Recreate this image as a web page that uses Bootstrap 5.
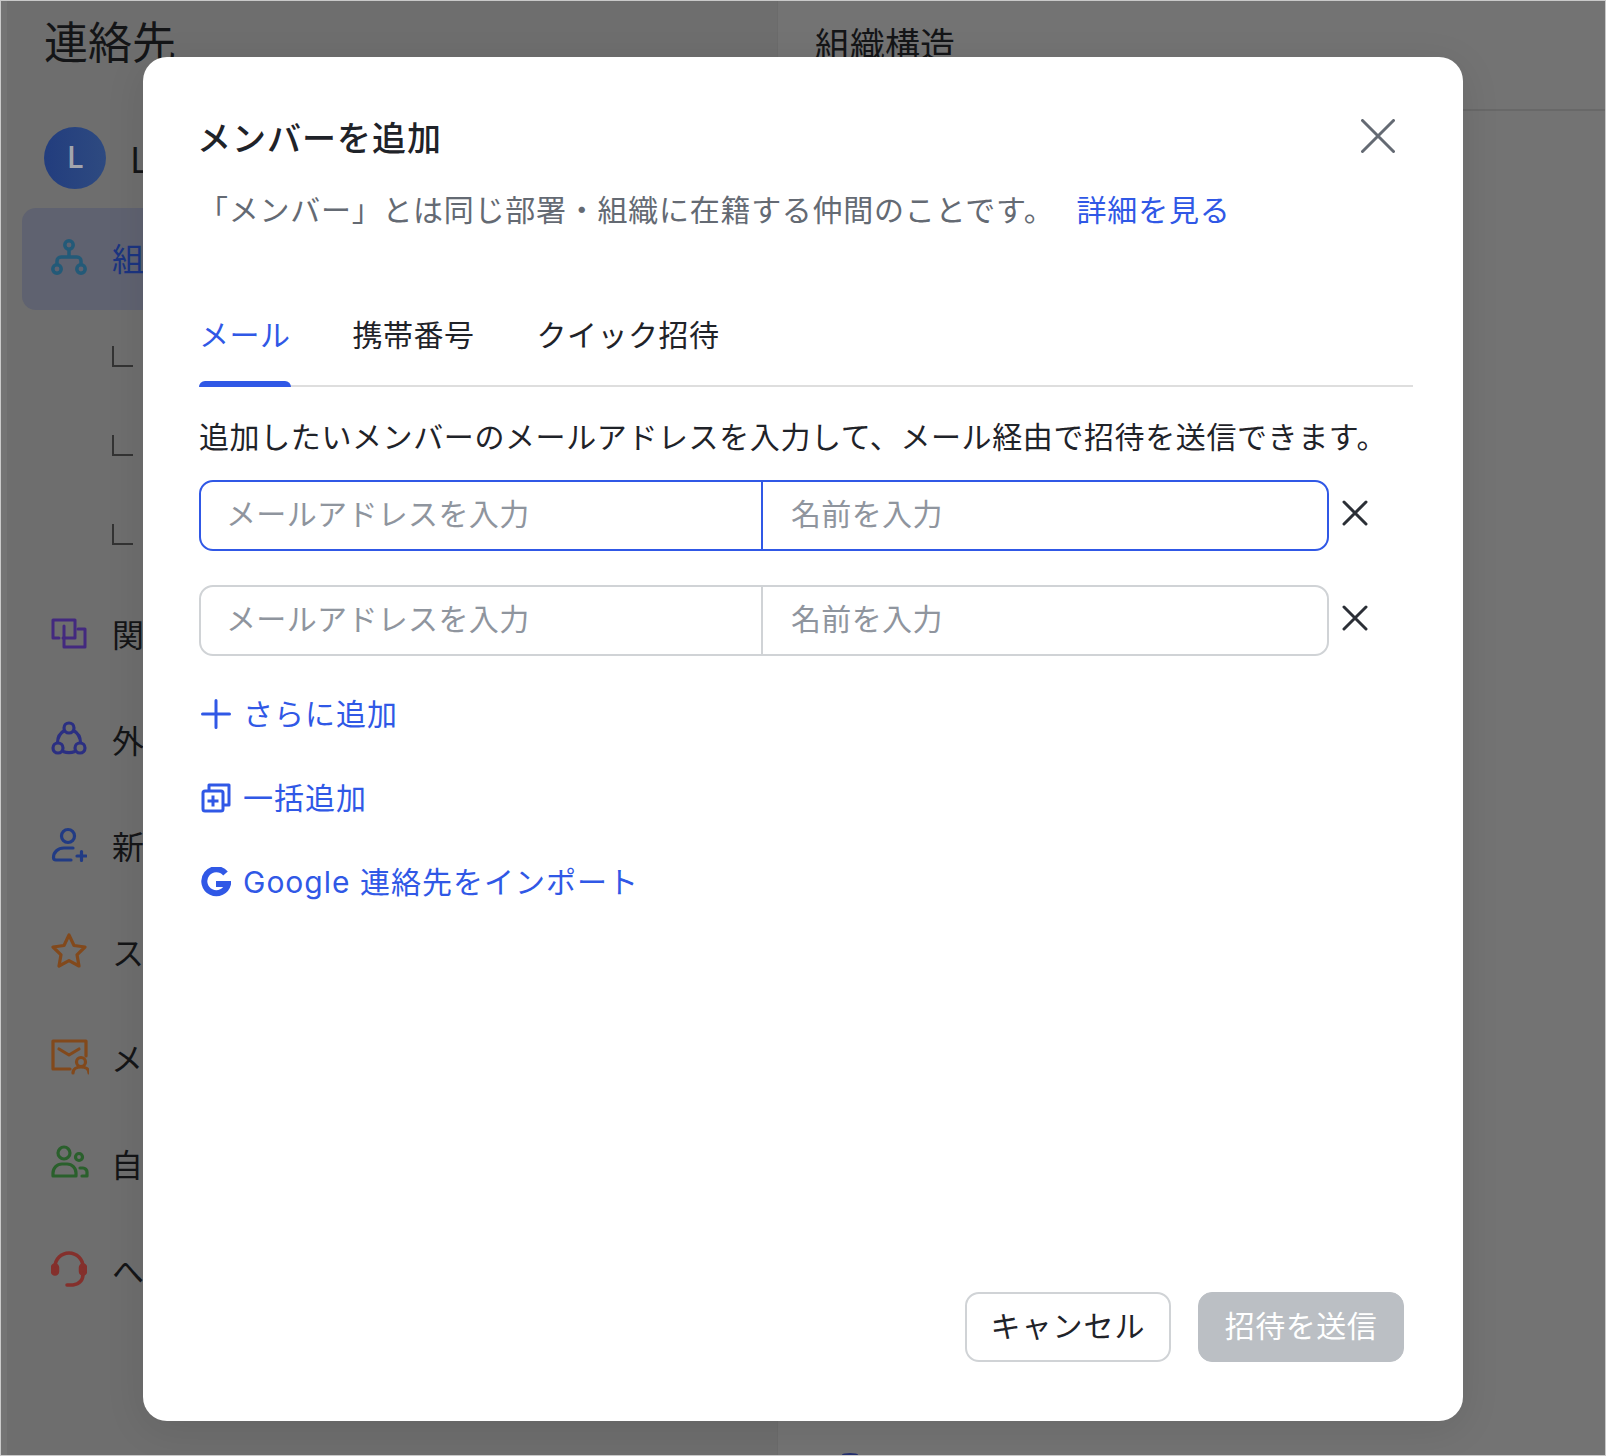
<!DOCTYPE html>
<html lang="ja">
<head>
<meta charset="utf-8">
<title>メンバーを追加</title>
<link href="https://cdn.jsdelivr.net/npm/bootstrap@5.3.0/dist/css/bootstrap.min.css" rel="stylesheet">
<style>
html,body{height:100%;margin:0}
body{font-family:"Noto Sans CJK JP","Liberation Sans",sans-serif;background:#737373;color:#1f2329;overflow:hidden}
.shell{width:1606px;height:1456px;position:relative;display:flex;border:1px solid #c9c9c9;overflow:hidden}
.side-pane{width:777px;background:#6e6e6e;padding:9px 22px 0 15px;flex:none;border-left:6px solid #747474;border-right:1px solid #6b6b6b}
.main-pane{flex:1;background:#737373;position:relative}
.peek{position:absolute;left:64px;bottom:-1px;width:16px;height:3px;border-radius:50%;background:#25306e}
.side-title{font-size:44px;line-height:60px;margin:0 0 0 22px;color:#141517;font-weight:400}
.main-title{font-size:35px;line-height:52px;padding:16px 0 0 37px;height:110px;border-bottom:2px solid #686868;color:#141517;margin:0;font-weight:400}
.who{display:flex;align-items:center;gap:24px;margin:57px 0 19px 22px;font-size:35px;color:#141517}
.who-av{width:62px;height:62px;border-radius:50%;background:linear-gradient(90deg,#223d7e,#2e4a80);color:#a3a5ad;font-size:30px;font-weight:500;padding-bottom:6px;display:flex;align-items:center;justify-content:center}
.side-row{height:100px;display:flex;align-items:center;gap:25px;padding-left:29px;font-size:32px;color:#141517;margin-bottom:6px}
.side-row.on{height:102px;padding-bottom:4px;background:#5f6270;border-radius:14px;color:#1b3480;margin-bottom:2px}
.ic-wide{margin-right:-3px}
.side-sub{height:89px;padding-left:90px;display:flex;align-items:center}
.side-sub i{display:block;width:21px;height:21px;border-left:2px solid #333;border-bottom:2px solid #333}
.sheet{position:absolute;left:142px;top:56px;width:1320px;height:1364px;background:#fff;border-radius:24px;box-shadow:0 8px 40px rgba(0,0,0,.09);padding:48px 50px 0 56px;display:flex;flex-direction:column}
.sheet-title{font-size:34px;line-height:64px;margin:0 0 0 -2px;font-weight:500;letter-spacing:1px;color:#1f2329}
.x-close{position:absolute;right:68px;top:62px;background:none;border:0;padding:0;line-height:0}
.sheet-desc{font-size:30px;line-height:44px;margin:17px 0 0 -1px;color:#646a73;white-space:nowrap;letter-spacing:.73px}
.sheet-desc a{color:#3058e6;text-decoration:none;margin-left:22px;letter-spacing:.8px}
.tabs-x{margin:81px 0 0;border-bottom:2px solid #dedede;gap:62px;width:1214px;flex-wrap:nowrap}
.tabs-x .nav-link{font-size:30px;line-height:44px;color:#1f2329;padding:0 0 30px;border:0;background:none;position:relative;border-radius:0;letter-spacing:.5px}
.tabs-x .nav-link.active{color:#3058e6}
.tabs-x .nav-link.active::after{content:"";position:absolute;left:0;width:92px;bottom:-2px;height:6px;background:#3058e6;border-radius:6px 6px 0 0}
.inst{font-size:30px;line-height:44px;margin:26px 0 0;color:#1f2329;white-space:nowrap;letter-spacing:.6px}
.mail-row{display:flex;align-items:center;gap:0;margin-top:23px;height:71px}
.mail-row+.mail-row{margin-top:34px}
.fields{width:1130px;height:71px;border:2px solid #d0d3d6;border-radius:14px;display:flex;overflow:hidden;flex:none;background:#fff}
.fields.live{border-color:#3058e6}
.fields .form-control{border:0;border-radius:0;font-size:30px;height:100%;padding:0 26px 8px 28px;box-shadow:none;font-family:inherit;background:transparent;letter-spacing:.35px}
.fields .form-control::placeholder{color:#8f959e;opacity:1}
.fields .form-control:first-child{flex:0 0 562px;border-right:2px solid #d0d3d6;padding-left:25px}
.fields.live .form-control:first-child{border-right-color:#3058e6}
.row-x{background:none;border:0;padding:0 0 5px;margin-left:13px;line-height:0}
.act{display:flex;align-items:center;color:#3058e6;font-size:30px;line-height:44px;text-decoration:none;font-family:"Inter","Noto Sans CJK JP",sans-serif;letter-spacing:1px}
.act svg{flex:none;margin:0 12px 0 2px}
.act-list{display:flex;flex-direction:column;gap:40px;margin-top:36px}
.foot-x{margin-top:auto;padding:0 9px 59px 0;display:flex;justify-content:flex-end;gap:27px}
.foot-x .btn{font-size:30px;line-height:44px;height:70px;border-radius:14px;padding:0 0 7px;font-family:inherit}
.foot-x .btn-ghost-x{width:206px;background:#fff;border:2px solid #d0d3d6;color:#1f2329;letter-spacing:1px}
.foot-x .btn-off-x{width:206px;--bs-btn-disabled-bg:#bbbfc4;--bs-btn-disabled-border-color:#bbbfc4;--bs-btn-disabled-color:#fff;--bs-btn-disabled-opacity:1;letter-spacing:.5px}
</style>
</head>
<body>
<div class="shell">
  <aside class="side-pane">
    <h1 class="side-title">連絡先</h1>
    <div class="who"><span class="who-av">L</span><span>L</span></div>
    <div class="side-row on">
      <svg width="36" height="36" viewBox="0 0 36 36" fill="none" stroke="#235a78" stroke-width="3.500"><circle cx="18" cy="6" r="4.200"/><circle cx="6" cy="30" r="4.200"/><circle cx="30" cy="30" r="4.200"/><path d="M18 10v8M6 25.800v-3.800a4 4 0 0 1 4-4h16a4 4 0 0 1 4 4v3.800"/></svg>
      <span>組</span>
    </div>
    <div class="side-sub"><i></i></div>
    <div class="side-sub"><i></i></div>
    <div class="side-sub"><i></i></div>
    <div class="side-row mt-1">
      <svg width="36" height="31" viewBox="0 0 36 31" fill="none" stroke="#43297f" stroke-width="3" stroke-linejoin="round" stroke-linecap="round"><path d="M8 20H2V2h22v18H12"/><path d="M13 8v21h21V11H27"/></svg>
      <span>関</span>
    </div>
    <div class="side-row">
      <svg width="36" height="36" viewBox="0 0 36 36" fill="none" stroke="#2b2f82" stroke-width="3.200"><circle cx="18" cy="7" r="5"/><circle cx="7" cy="27" r="5"/><circle cx="29" cy="27" r="5"/><path d="M13.500 9.500C9 12 6.500 17 6.500 22M22.500 9.500C27 12 29.500 17 29.500 22M12 30.500c4 1.500 8 1.500 12 0"/></svg>
      <span>外</span>
    </div>
    <div class="side-row">
      <svg width="36" height="36" viewBox="0 0 36 36" fill="none" stroke="#213b84" stroke-width="3.200" stroke-linecap="round"><circle cx="17" cy="9" r="6.500"/><path d="M20 33H5c-2 0-2.500-1-2.500-2.500C2.500 25 7 21 13 21h9M26 29h9M30.500 24.500v9"/></svg>
      <span>新</span>
    </div>
    <div class="side-row">
      <svg width="36" height="36" viewBox="0 0 36 36" fill="none" stroke="#82491c" stroke-width="3.200" stroke-linejoin="round"><path d="M18 2l5 10.500 11 1.500-8 7.800 2 11.200-10-5.300L8 33l2-11.200-8-7.800 11-1.500z"/></svg>
      <span>ス</span>
    </div>
    <div class="side-row">
      <svg class="ic-wide" width="38" height="36" viewBox="0 0 38 36" fill="none" stroke="#82491c" stroke-width="3.200" stroke-linecap="round" stroke-linejoin="round"><path d="M19 30H2V2h33v15"/><path d="M8 10l10 6 10-6"/><circle cx="30" cy="23" r="4.500"/><path d="M22 34c0-4 3.500-6 8-6s8 2 8 6"/></svg>
      <span>メ</span>
    </div>
    <div class="side-row">
      <svg class="ic-wide" width="38" height="36" viewBox="0 0 38 36" fill="none" stroke="#2a602c" stroke-width="3.200" stroke-linecap="round" stroke-linejoin="round"><circle cx="13" cy="8" r="6"/><path d="M2 31v-3c0-5 4-9 9-9h5c5 0 9 4 9 9v3z"/><circle cx="28" cy="12" r="3.500"/><path d="M29 23h3c2 0 4 2 4 4v4h-5"/></svg>
      <span>自</span>
    </div>
    <div class="side-row">
      <svg width="36" height="38" viewBox="0 0 36 38" fill="none" stroke="#84302c" stroke-width="3.500" stroke-linecap="round"><path d="M4 20V17a14 14 0 0 1 28 0v7c0 7-4 10-10 11h-6"/><rect x="1.500" y="15" width="5" height="9" rx="2.500" fill="#84302c"/><rect x="29.500" y="15" width="5" height="9" rx="2.500" fill="#84302c"/></svg>
      <span>へ</span>
    </div>
  </aside>
  <main class="main-pane"><h2 class="main-title">組織構造</h2><span class="peek"></span></main>

  <section class="sheet" role="dialog" aria-label="メンバーを追加">
    <h3 class="sheet-title">メンバーを追加</h3>
    <button class="x-close" type="button" aria-label="閉じる">
      <svg width="34" height="34" viewBox="0 0 34 34" stroke="#646a73" stroke-width="3" stroke-linecap="round"><path d="M1.500 1.500l31 31M32.500 1.500l-31 31"/></svg>
    </button>
    <p class="sheet-desc">「メンバー」とは同じ部署・組織に在籍する仲間のことです。<a href="#">詳細を見る</a></p>
    <ul class="nav tabs-x">
      <li class="nav-item"><a class="nav-link active" href="#">メール</a></li>
      <li class="nav-item"><a class="nav-link" href="#">携帯番号</a></li>
      <li class="nav-item"><a class="nav-link" href="#">クイック招待</a></li>
    </ul>
    <p class="inst">追加したいメンバーのメールアドレスを入力して、メール経由で招待を送信できます。</p>
    <div class="mail-row">
      <div class="fields live"><input class="form-control" placeholder="メールアドレスを入力"><input class="form-control" placeholder="名前を入力"></div>
      <button class="row-x" type="button" aria-label="削除"><svg width="26" height="26" viewBox="0 0 26 26" stroke="#2b2f36" stroke-width="3" stroke-linecap="round"><path d="M2 2l22 22M24 2L2 24"/></svg></button>
    </div>
    <div class="mail-row">
      <div class="fields"><input class="form-control" placeholder="メールアドレスを入力"><input class="form-control" placeholder="名前を入力"></div>
      <button class="row-x" type="button" aria-label="削除"><svg width="26" height="26" viewBox="0 0 26 26" stroke="#2b2f36" stroke-width="3" stroke-linecap="round"><path d="M2 2l22 22M24 2L2 24"/></svg></button>
    </div>
    <div class="act-list">
      <a class="act" href="#"><svg width="30" height="30" viewBox="0 0 30 30" stroke="#3058e6" stroke-width="3" stroke-linecap="round"><path d="M1.500 15h27M15 1.500v27"/></svg>さらに追加</a>
      <a class="act" href="#"><svg width="30" height="30" viewBox="0 0 30 30" fill="none" stroke="#3058e6" stroke-width="3" stroke-linejoin="round"><path d="M8 8V2h20v20h-6"/><rect x="2" y="8" width="20" height="20" rx="2"/><path d="M12 12.500v11M6.500 18h11"/></svg>一括追加</a>
      <a class="act" href="#"><svg width="30" height="30" viewBox="0 0 30 30" fill="none" stroke="#3058e6" stroke-width="6"><path d="M24.500 6.500A12 12 0 1 0 27 17H15"/></svg>Google 連絡先をインポート</a>
    </div>
    <div class="foot-x">
      <button class="btn btn-ghost-x" type="button">キャンセル</button>
      <button class="btn btn-off-x" type="button" disabled>招待を送信</button>
    </div>
  </section>
</div>
<script src="https://cdn.jsdelivr.net/npm/bootstrap@5.3.0/dist/js/bootstrap.bundle.min.js"></script>
</body>
</html>
